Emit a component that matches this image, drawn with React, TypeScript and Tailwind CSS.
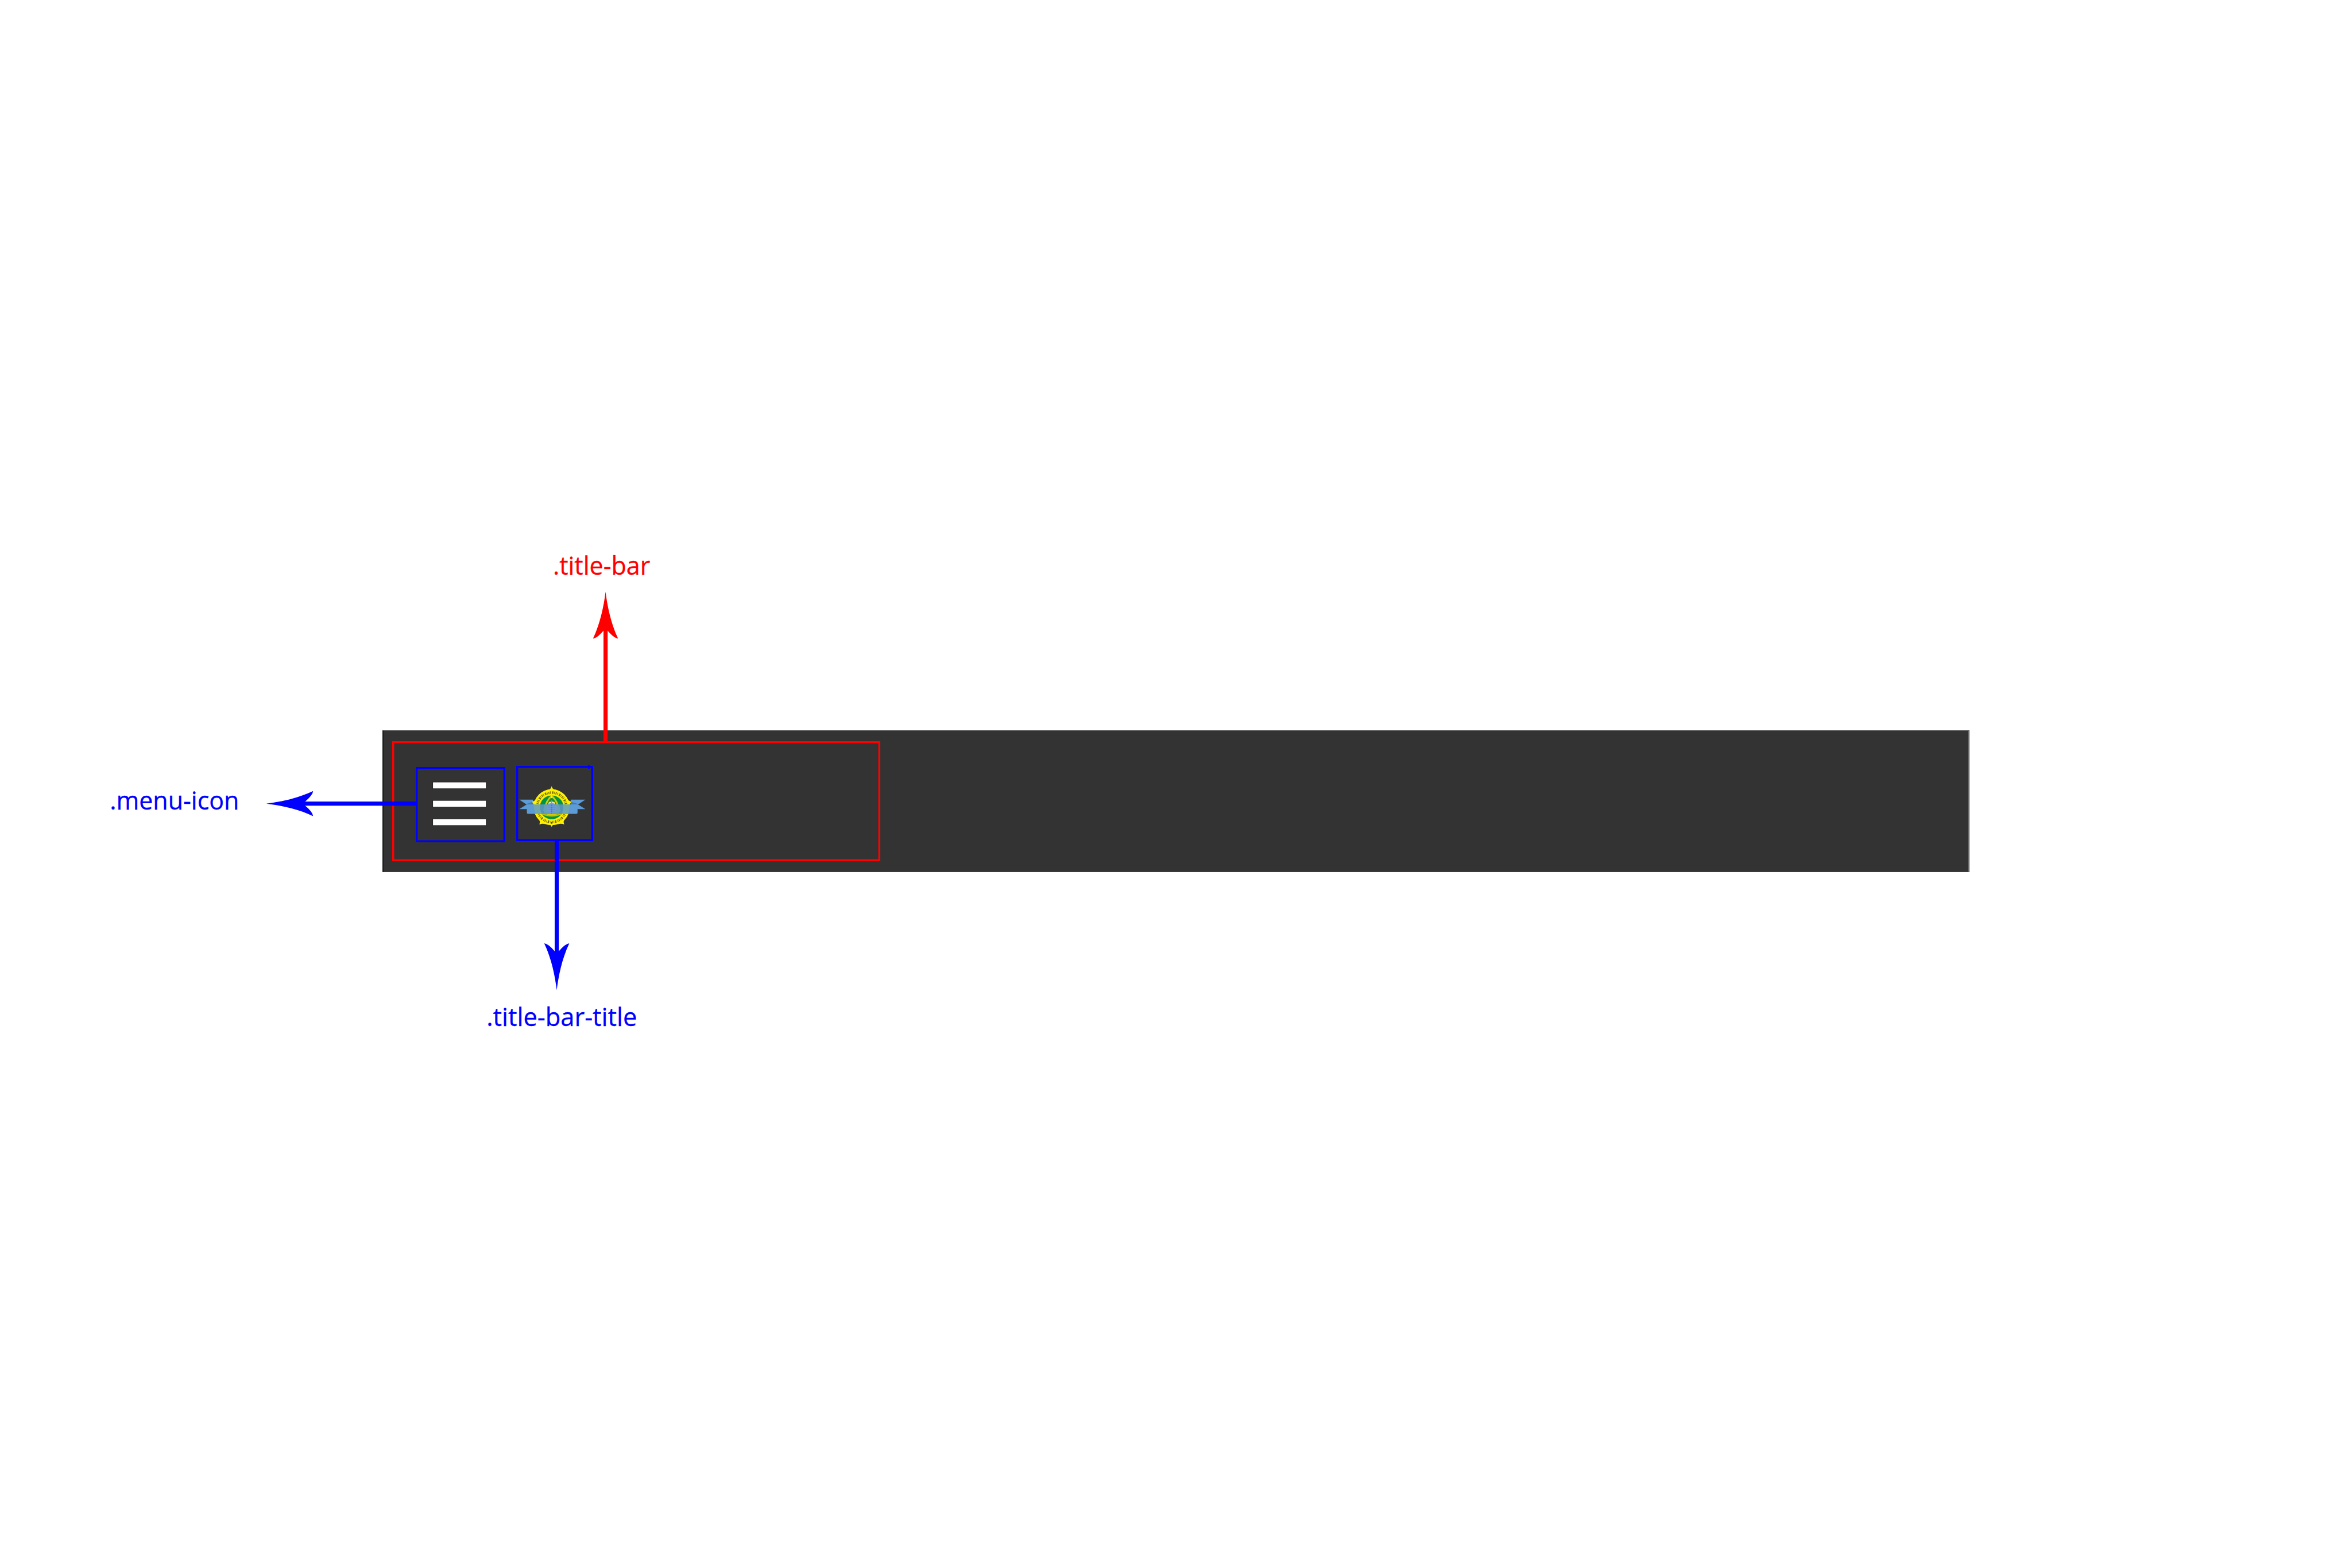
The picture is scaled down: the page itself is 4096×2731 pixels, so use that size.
import React from "react";

const RED = "#ff0000";
const BLUE = "#0000ff";

// Arrow head with its tip at the origin, pointing up.
const HEAD =
  "M0 0 C4 33 13 80 32 119.3 Q21 118 5.4 99 H-5.4 Q-21 118 -32 119.3 C-13 80 -4 33 0 0 Z";

function Arrow({ x, y, angle, length, color }: { x: number; y: number; angle: number; length: number; color: string }) {
  return (
    <g transform={`translate(${x} ${y}) rotate(${angle})`} fill={color}>
      <path d={HEAD} />
      <rect x={-5.3} y={95} width={10.6} height={length - 95} />
    </g>
  );
}

function Label({ x, y, width, color, children }: { x: number; y: number; width: number; color: string; children: string }) {
  return (
    <text
      x={x}
      y={y}
      fill={color}
      stroke={color}
      strokeWidth={0.5}
      textLength={width}
      lengthAdjust="spacingAndGlyphs"
      className="font-['Open_Sans','Noto_Sans',sans-serif] text-[64.5px]"
    >
      {children}
    </text>
  );
}

function Emblem() {
  return (
    <svg viewBox="66 57 558 546" className="h-full w-full" aria-label="Emblem">
      <defs>
        <filter id="soft" x="-5%" y="-5%" width="110%" height="110%">
          <feGaussianBlur stdDeviation="2.5" />
        </filter>
      </defs>
      <g filter="url(#soft)">
        <path d="M76 302H182V375H76L132 339Z M582 302H470V375H582L526 339Z" fill="#5b9bd5" />
        <path d="M134 334L180 318V340H134Z M522 334L472 318V340H522Z" fill="#457aab" />
        <g fill="#fff000">
          <circle cx="324" cy="360" r="138" />
          <path d="M300 226Q320 222 324 198Q328 222 348 226Z" />
          <path d="M212 285Q196 318 174 317Q186 332 188 352Z" />
          <path d="M436 285Q454 318 476 317Q463 332 460 352Z" />
          <path d="M226 448Q238 468 230 492Q254 482 276 490Z" />
          <path d="M424 448Q410 468 420 492Q396 482 372 490Z" />
        </g>
        <circle cx="324" cy="361" r="113" fill="none" stroke="#5c5200" strokeWidth="19" strokeDasharray="7 6 5 10 11 6 4 7" opacity=".85" />
        <circle cx="324" cy="361" r="97" fill="#f2e600" />
        <circle cx="324" cy="361" r="91" fill="#009245" />
        <path d="M324 266Q274 302 261 388Q278 425 324 425Q370 425 388 388Q374 302 324 266Z" fill="#d9c900" />
        <path d="M324 283Q286 313 276 387Q292 411 324 411Q356 411 373 387Q362 313 324 283Z" fill="#168f3c" />
        <path d="M324 268V290" stroke="#fff000" strokeWidth="10" />
        <path d="M240 398Q324 446 410 398L404 414Q324 449 246 414Z" fill="#c4c000" />
        <path d="M298 337Q301 312 314 320L324 309L334 320Q348 312 351 337Z" fill="#f4ed31" />
        <path d="M302 340Q310 319 324 318Q338 320 347 340Z" fill="#f0edf5" />
        <path d="M324 312V334" stroke="#89708a" strokeWidth="5" />
        <path d="M134 338H522V400Q522 411 511 411H145Q134 411 134 400Z" fill="#5b9bd5" />
        <path d="M188 338H463Q464 377 447 411H204Q184 377 188 338Z" fill="#70a7b0" />
        <path d="M236 338H412V378L404 411H247L237 378Z" fill="#5794b4" />
        <path d="M267 338H382L390 385L376 411H272L260 385Z" fill="#659fb9" />
        <circle cx="324" cy="366" r="39" fill="#6d9bd5" />
        <path d="M300 347H348M296 361H352M298 376H350M306 391H342" stroke="#537fca" strokeWidth="4" opacity=".5" />
        <path d="M324 340V411" stroke="#4976c2" strokeWidth="7" strokeDasharray="12 4" />
        <path d="M316 499L324 488L332 499L324 510Z" fill="#d9d9d2" />
        <path d="M324 474V487" stroke="#403f18" strokeWidth="6" />
      </g>
    </svg>
  );
}

function MenuIcon() {
  return (
    <svg viewBox="1060 1957 229 192" className="h-full w-full" aria-label="Menu">
      <g fill="#fff" stroke="#252525" strokeWidth="3" paintOrder="stroke">
        <rect x="1104" y="1996" width="135" height="15.5" />
        <rect x="1104" y="2043" width="135" height="15.5" />
        <rect x="1104" y="2090" width="135" height="15.5" />
      </g>
    </svg>
  );
}

export default function App() {
  return (
    <main className="relative h-[2731px] w-[4096px] overflow-hidden bg-white pt-[1271.8px] pl-[665.6px]">
      <header className="h-[247.2px] w-[2764px] border-y border-r-2 border-l-3 border-y-[#444444] border-r-[#858585] border-l-[#1e2122] bg-[#333333] pt-[18.1px] pl-[14.7px]">
        <section className="flex h-[209.6px] w-[849.3px] items-start pl-[40.3px] shadow-[inset_0_0_0_3.4px_#ff0000]">
          <button className="mt-[45.1px] h-[131px] w-[156.4px] shadow-[inset_0_0_0_3.4px_#0000ff]">
            <MenuIcon />
          </button>
          <div className="mt-[43px] ml-[19.1px] h-[131px] w-[133.8px] p-[3.4px] shadow-[inset_0_0_0_3.4px_#0000ff]">
            <Emblem />
          </div>
        </section>
      </header>

      {/* Callouts lying over the bar */}
      <svg viewBox="0 0 6000 4000" preserveAspectRatio="xMinYMin meet" className="absolute inset-0 h-[2731px] w-[4096px]">
        <Arrow x={1544.8} y={1510} angle={0} length={384} color={RED} />
        <Arrow x={679.5} y={2050.3} angle={-90} length={382} color={BLUE} />
        <Arrow x={1420.3} y={2526} angle={180} length={382} color={BLUE} />
        <rect x={1500} y={1952} width={4} height={10} fill={BLUE} />
        <Label x={1410.5} y={1465.7} width={248} color={RED}>.title-bar</Label>
        <Label x={280} y={2065.3} width={330} color={BLUE}>.menu-icon</Label>
        <Label x={1241} y={2618.2} width={384} color={BLUE}>.title-bar-title</Label>
      </svg>
    </main>
  );
}
